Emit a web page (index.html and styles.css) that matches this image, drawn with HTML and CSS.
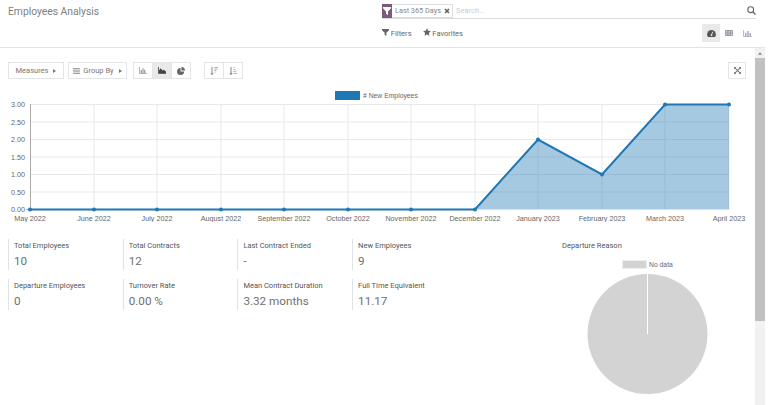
FILE: index.html
```html
<!DOCTYPE html>
<html lang="en">
<head>
    <meta charset="UTF-8">
    <meta name="viewport" content="width=device-width, initial-scale=1.0">
    <title>Employees Analysis</title>
    <link rel="stylesheet" href="styles.css">
</head>
<body>

<div class="app">
    <header class="control-panel">
        <h1 class="title">Employees Analysis</h1>
        <div class="controls">
            <div class="search-row">
                <div class="facet">
                    <span class="facet-icon">
                        <svg width="8" height="8" viewBox="0 0 8 8"><path d="M0 0h8v1.3L5 4.4V8L3 6.8V4.4L0 1.3z" fill="#fff"/></svg>
                    </span>
                    <span class="facet-label">Last 365 Days</span>
                    <svg class="facet-close" width="6" height="6" viewBox="0 0 6 6"><path d="M1 1l4 4M5 1L1 5" stroke="#666" stroke-width="1.7"/></svg>
                </div>
                <span class="search-input">Search...</span>
                <svg class="search-icon" width="9" height="9" viewBox="0 0 9 9"><circle cx="3.7" cy="3.7" r="2.9" fill="none" stroke="#666" stroke-width="1.1"/><path d="M5.8 5.8L8.5 8.5" stroke="#666" stroke-width="1.4"/></svg>
            </div>
            <div class="filter-row">
                <button class="link-btn">
                    <svg width="7" height="7" viewBox="0 0 8 8"><path d="M0 0h8v1.3L5 4.4V8L3 6.8V4.4L0 1.3z" fill="#666"/></svg>
                    Filters
                </button>
                <button class="link-btn favorites">
                    <svg width="8" height="8" viewBox="0 0 10 10"><path d="M5 .3l1.5 3.1 3.4.5-2.5 2.4.6 3.4L5 8.1 2 9.7l.6-3.4L.1 3.9l3.4-.5z" fill="#666"/></svg>
                    Favorites
                </button>
                <div class="view-switch">
                    <span class="view-btn active">
                        <svg width="9" height="7" viewBox="0 0 10 8"><path d="M5 0a5 5 0 0 0-5 5c0 1.200.4 2.200 1 3h8c.6-.8 1-1.800 1-3a5 5 0 0 0-5-5z" fill="#555"/><path d="M5 5.500L6.500 2" stroke="#e9e9e9" stroke-width="1"/><circle cx="5" cy="5.800" r="1" fill="#e9e9e9"/></svg>
                    </span>
                    <span class="view-btn">
                        <svg width="8" height="6" viewBox="0 0 10 8"><path d="M.5.5h9v7h-9zM.5 2.800h9M.5 5.200h9M3.500.5v7M6.500.5v7" fill="none" stroke="#778" stroke-width="1"/></svg>
                    </span>
                    <span class="view-btn">
                        <svg width="9" height="7" viewBox="0 0 10 8"><path d="M.5 0v7.500H10" fill="none" stroke="#9ab" stroke-width=".9"/><path d="M2.500 3h1.200v4H2.500zM5 1h1.200v6H5zM7.500 3.500h1.200V7H7.500z" fill="#889"/></svg>
                    </span>
                </div>
            </div>
        </div>
    </header>

    <div class="content-wrap">
        <main class="content">
            <div class="toolbar">
                <button class="btn measures">Measures <i class="caret"></i></button>
                <button class="btn group-by">
                    <svg width="7" height="6" viewBox="0 0 8 7"><path d="M0 .5h8M0 2.500h8M0 4.500h8M0 6.500h8" stroke="#888" stroke-width="1"/></svg>
                    Group By <i class="caret"></i>
                </button>
                <div class="btn-group modes">
                    <span class="btn icon-btn">
                        <svg width="8" height="7" viewBox="0 0 9 8"><path d="M.5 0v7.500H9" fill="none" stroke="#999" stroke-width=".9"/><path d="M2 3.500h1V7H2zM4 1.500h1V7H4zM6 3h1v4H6z" fill="#777"/></svg>
                    </span>
                    <span class="btn icon-btn active">
                        <svg width="8" height="7" viewBox="0 0 9 8"><path d="M.5 0v7.500H9" fill="none" stroke="#444" stroke-width=".9"/><path d="M1 7V4l2-2.500L5 4l1.500-1L9 5v2z" fill="#444"/></svg>
                    </span>
                    <span class="btn icon-btn">
                        <svg width="8" height="8" viewBox="0 0 9 9"><path d="M4 1a4 4 0 1 0 4 4H4z" fill="#666"/><path d="M5 0a4 4 0 0 1 4 4H5z" fill="#666"/></svg>
                    </span>
                </div>
                <div class="btn-group sorts">
                    <span class="btn icon-btn">
                        <svg width="8" height="8" viewBox="0 0 10 10"><path d="M2.500 0v9M1 7.500L2.500 9.500 4 7.500" fill="none" stroke="#666" stroke-width="1"/><path d="M5.500.5H10M5.500 2.500H9M5.500 4.500H8M5.500 6.500H7" stroke="#999" stroke-width="1"/></svg>
                    </span>
                    <span class="btn icon-btn">
                        <svg width="8" height="8" viewBox="0 0 10 10"><path d="M2.500 0v9M1 7.500L2.500 9.500 4 7.500" fill="none" stroke="#666" stroke-width="1"/><path d="M5.500.5H7M5.500 3H8M5.500 5.500H9M5.500 8H10" stroke="#999" stroke-width="1"/></svg>
                    </span>
                </div>
                <span class="btn icon-btn expand">
                    <svg width="7" height="7" viewBox="0 0 9 9"><path d="M.5.500L8.500 8.500M8.500.500L.5 8.500" stroke="#777" stroke-width="1.300"/><path d="M0 0h3L0 3zM9 0v3L6 0zM0 9V6l3 3zM9 9H6l3-3z" fill="#777"/></svg>
                </span>
            </div>

            <svg class="chart" width="755" height="137" viewBox="0 85 755 137">
                <rect x="335" y="91" width="25" height="9" fill="#1f77b4"/>
                <text x="363" y="98" class="legend-text"># New Employees</text>

                <g class="grid">
                    <path d="M30 104.500H729M30 122H729M30 139.500H729M30 157H729M30 174.500H729M30 192H729"/>
                    <path d="M94 104.500V209.500M157 104.500V209.500M221 104.500V209.500M284 104.500V209.500M348 104.500V209.500M411 104.500V209.500M475 104.500V209.500M538 104.500V209.500M602 104.500V209.500M665 104.500V209.500M729 104.500V209.500"/>
                </g>
                <path d="M30.500 104V210M26 209.500H30" class="axis"/>

                <path d="M475 209.500L538 139.500L602 174.500L665 104.500H729V209.500Z" fill="#1f77b4" fill-opacity=".4"/>
                <path d="M30 209.500H475L538 139.500L602 174.500L665 104.500H729" class="line"/>
                <g fill="#1f77b4">
                    <circle cx="30" cy="209.500" r="2"/><circle cx="94" cy="209.500" r="2"/><circle cx="157" cy="209.500" r="2"/>
                    <circle cx="221" cy="209.500" r="2"/><circle cx="284" cy="209.500" r="2"/><circle cx="348" cy="209.500" r="2"/>
                    <circle cx="411" cy="209.500" r="2"/><circle cx="475" cy="209.500" r="2"/><circle cx="538" cy="139.500" r="2"/>
                    <circle cx="602" cy="174.500" r="2"/><circle cx="665" cy="104.500" r="2"/><circle cx="729" cy="104.500" r="2"/>
                </g>

                <g class="y-labels">
                    <text x="25" y="107">3.00</text>
                    <text x="25" y="124.500">2.50</text>
                    <text x="25" y="142">2.00</text>
                    <text x="25" y="159.500">1.50</text>
                    <text x="25" y="177">1.00</text>
                    <text x="25" y="194.500">0.50</text>
                    <text x="25" y="212">0.00</text>
                </g>
                <g class="x-labels">
                    <text x="30" y="221">May 2022</text>
                    <text x="94" y="221">June 2022</text>
                    <text x="157" y="221">July 2022</text>
                    <text x="221" y="221">August 2022</text>
                    <text x="284" y="221">September 2022</text>
                    <text x="348" y="221">October 2022</text>
                    <text x="411" y="221">November 2022</text>
                    <text x="475" y="221">December 2022</text>
                    <text x="538" y="221">January 2023</text>
                    <text x="602" y="221">February 2023</text>
                    <text x="665" y="221">March 2023</text>
                    <text x="729" y="221">April 2023</text>
                </g>
            </svg>

            <div class="bottom">
                <div class="kpis">
                    <div class="kpi"><div class="kpi-label">Total Employees</div><div class="kpi-value">10</div></div>
                    <div class="kpi"><div class="kpi-label">Total Contracts</div><div class="kpi-value">12</div></div>
                    <div class="kpi"><div class="kpi-label">Last Contract Ended</div><div class="kpi-value">-</div></div>
                    <div class="kpi"><div class="kpi-label">New Employees</div><div class="kpi-value">9</div></div>
                    <div class="kpi"><div class="kpi-label">Departure Employees</div><div class="kpi-value">0</div></div>
                    <div class="kpi"><div class="kpi-label">Turnover Rate</div><div class="kpi-value">0.00 %</div></div>
                    <div class="kpi"><div class="kpi-label">Mean Contract Duration</div><div class="kpi-value">3.32 months</div></div>
                    <div class="kpi"><div class="kpi-label">Full Time Equivalent</div><div class="kpi-value">11.17</div></div>
                </div>
                <div class="departure">
                    <div class="departure-title">Departure Reason</div>
                    <svg class="pie" width="193" height="145" viewBox="0 0 193 145">
                        <rect x="60.500" y="0.500" width="24" height="8" fill="#d3d3d3" stroke="#eee"/>
                        <text x="87" y="6.500" class="legend-text">No data</text>
                        <circle cx="85.500" cy="74" r="60" fill="#d3d3d3"/>
                        <path d="M85.500 14V74" stroke="#fff" stroke-width="1"/>
                    </svg>
                </div>
            </div>
        </main>
        <div class="scrollbar">
            <div class="scroll-up"></div>
            <div class="scroll-thumb"></div>
        </div>
    </div>
</div>

</body>
</html>
```

FILE: styles.css
```css
html, body {
    margin: 0;
    height: 100%;
    overflow: hidden;
    background: #fff;
}
body {
    font-family: Roboto, "Liberation Sans", sans-serif;
    font-size: 7.5px;
    color: #666;
}
.app {
    width: 765px;
    height: 405px;
    display: flex;
    flex-direction: column;
}

/* header */
.control-panel {
    height: 47px;
    flex-shrink: 0;
    display: flex;
    justify-content: space-between;
    padding: 0 9px 0 8px;
    border-bottom: 1px solid #e4e4e4;
}
.title {
    margin: 4px 0 0;
    font-size: 10.300px;
    line-height: 15px;
    font-weight: 400;
    color: #808080;
}
.controls {
    width: 374px;
}
.search-row {
    display: flex;
    align-items: center;
    height: 15px;
    margin-top: 3px;
    border-bottom: 1px solid #dcdcdc;
}
.facet {
    display: flex;
    align-items: center;
    width: 71px;
    height: 14px;
    box-sizing: border-box;
    border: 1px solid #ddd;
    border-left: none;
    color: #888;
    font-size: 7.300px;
}
.facet-icon {
    width: 10px;
    height: 14px;
    margin-top: -1px;
    margin-bottom: -1px;
    display: flex;
    align-items: center;
    justify-content: center;
    background: #7c5a7c;
}
.facet-label {
    margin-left: 3px;
}
.facet-close {
    margin-left: 3px;
}
.search-input {
    margin-left: 3px;
    color: #ccc;
}
.search-icon {
    margin-left: auto;
}
.filter-row {
    display: flex;
    align-items: center;
    height: 18px;
    margin-top: 5px;
}
.link-btn {
    padding: 0;
    border: none;
    background: none;
    font: inherit;
    color: #666;
}
.favorites {
    margin-left: 11px;
}
.view-switch {
    display: flex;
    margin-left: auto;
}
.view-btn {
    width: 18px;
    height: 18px;
    display: flex;
    align-items: center;
    justify-content: center;
}
.view-btn.active {
    background: #e9e9e9;
}

/* main */
.content-wrap {
    flex: 1;
    display: flex;
    min-height: 0;
}
.content {
    width: 755px;
    flex-shrink: 0;
}
.toolbar {
    display: flex;
    align-items: center;
    height: 17px;
    padding: 14px 9px 6px 8px;
}
.btn {
    height: 17px;
    box-sizing: border-box;
    display: flex;
    align-items: center;
    justify-content: center;
    gap: 3px;
    padding: 0;
    border: 1px solid #e3e6e8;
    background: #fff;
    font: inherit;
    color: #777;
}
.measures {
    width: 56px;
}
.group-by {
    width: 59px;
    margin-left: 4px;
}
.caret {
    margin-left: 2px;
    border-left: 3px solid #777;
    border-top: 2px solid transparent;
    border-bottom: 2px solid transparent;
}
.btn-group {
    display: flex;
}
.btn-group .btn + .btn {
    margin-left: -1px;
}
.modes {
    margin-left: 6px;
}
.sorts {
    margin-left: 13px;
}
.icon-btn {
    width: 20px;
}
.icon-btn.active {
    background: #e9e9e9;
}
.expand {
    width: 18px;
    margin-left: auto;
}
.chart {
    display: block;
}
.chart text {
    font-family: "Liberation Sans", Arial, sans-serif;
    font-size: 7.200px;
    fill: #666;
}
.grid path {
    fill: none;
    stroke: #e8e8e8;
    stroke-width: 1;
}
.axis {
    fill: none;
    stroke: #aaa;
    stroke-width: 1;
}
.line {
    fill: none;
    stroke: #1f77b4;
    stroke-width: 2;
}
.y-labels text {
    text-anchor: end;
}
.x-labels text {
    text-anchor: middle;
}

/* bottom */
.bottom {
    display: flex;
    padding-top: 17px;
}
.kpis {
    width: 460px;
    margin-left: 8px;
    display: grid;
    grid-template-columns: repeat(4, 114.700px);
    grid-auto-rows: 31px;
    row-gap: 9px;
    align-content: start;
}
.kpi {
    box-sizing: border-box;
    padding-left: 5px;
    border-left: 1px solid #e0e3e6;
}
.kpi-label {
    font-size: 7.500px;
    line-height: 14px;
    color: #555;
}
.kpi-value {
    font-size: 11.700px;
    line-height: 17px;
    color: #707070;
}
.departure {
    margin-left: 94px;
}
.departure-title {
    height: 21px;
    line-height: 13px;
    color: #555;
}
.pie {
    display: block;
}
.chart .legend-text,
.legend-text {
    font-family: "Liberation Sans", Arial, sans-serif;
    font-size: 6.800px;
    fill: #666;
}

/* scrollbar */
.scrollbar {
    width: 10px;
    background: #f1f1f1;
}
.scroll-up {
    height: 10px;
    position: relative;
}
.scroll-up::after {
    content: "";
    position: absolute;
    left: 3px;
    top: 4px;
    border-left: 2px solid transparent;
    border-right: 2px solid transparent;
    border-bottom: 3px solid #999;
}
.scroll-thumb {
    height: 263px;
    background: #c1c1c1;
}
```
